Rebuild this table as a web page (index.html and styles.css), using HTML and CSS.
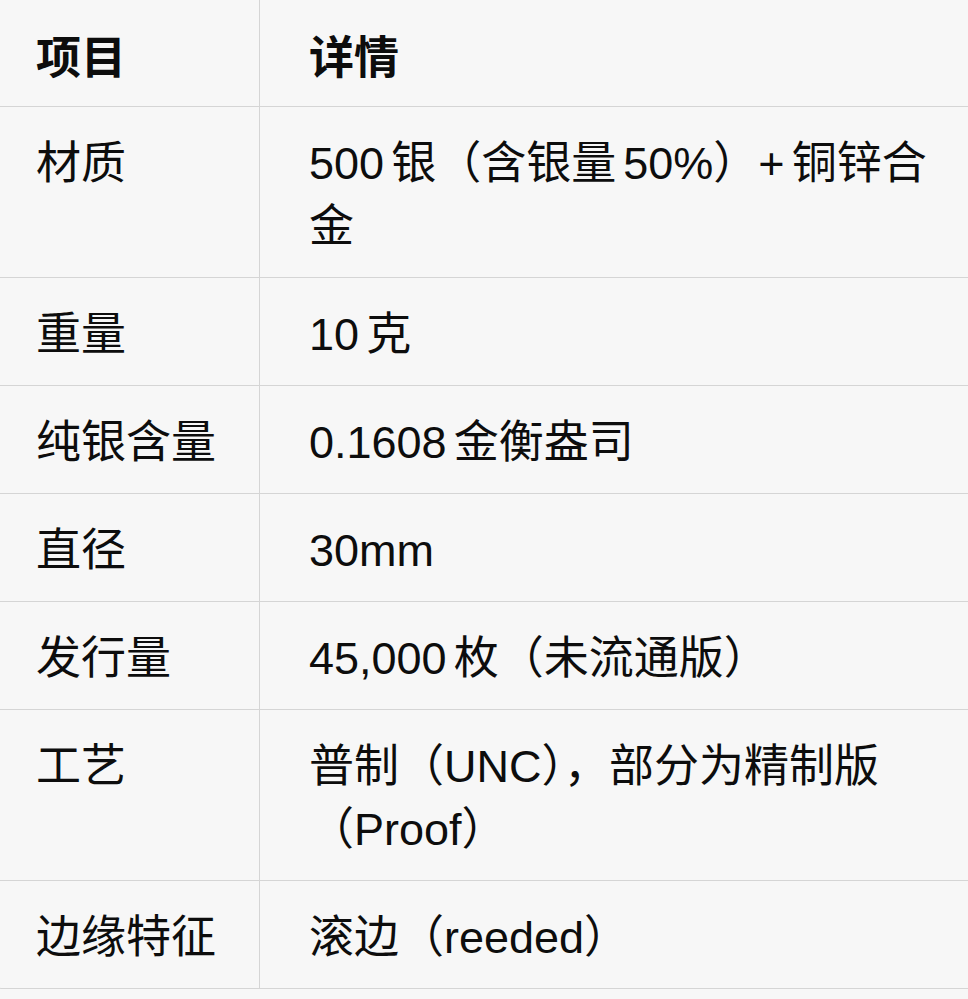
FILE: index.html
```html
<!DOCTYPE html>
<html lang="zh-CN">
<head>
<meta charset="utf-8">
<title>规格</title>
<link rel="stylesheet" href="styles.css">
</head>
<body>
<div class="scroller">
  <table class="spec">
    <thead>
      <tr><th class="key">项目</th><th class="val">详情</th></tr>
    </thead>
    <tbody>
      <tr><td class="key">材质</td><td class="val">500 银（含银量 50%）+ 铜锌合金</td></tr>
      <tr><td class="key">重量</td><td class="val">10 克</td></tr>
      <tr><td class="key">纯银含量</td><td class="val">0.1608 金衡盎司</td></tr>
      <tr><td class="key">直径</td><td class="val">30mm</td></tr>
      <tr><td class="key">发行量</td><td class="val">45,000 枚（未流通版）</td></tr>
      <tr><td class="key">工艺</td><td class="val">普制（UNC），部分为精制版（Proof）</td></tr>
      <tr><td class="key">边缘特征</td><td class="val">滚边（reeded）</td></tr>
    </tbody>
  </table>
</div>
</body>
</html>
```

FILE: styles.css
```css
html, body {
  margin: 0;
  padding: 0;
  background: #f7f7f7;
  overflow: hidden;
}

body {
  font-family: "Liberation Sans", "Noto Sans CJK SC", sans-serif;
  font-size: 45px;
  line-height: 63px;
  color: #0d0d0d;
}

.scroller {
  margin: -2px 0 0 -13px;
  width: calc(100% + 13px);
  overflow: hidden;
}

.spec {
  width: 1008px;
  border-collapse: separate;
  border-spacing: 0;
  border: 1px solid #d5d5d5;
  border-radius: 14px;
  background: #f7f7f7;
  table-layout: fixed;
  word-spacing: -0.12em;
}

.spec th,
.spec td {
  text-align: left;
  vertical-align: top;
  padding: 25px 49px 19px 49px;
  border-top: 1px solid #d5d5d5;
}

.spec thead th {
  border-top: none;
  padding-top: 28px;
  padding-bottom: 16px;
  font-weight: 700;
}

.spec .key {
  width: 223px;
  padding-left: 48px;
  padding-right: 0;
  border-right: 1px solid #d5d5d5;
}

.spec .val {
  padding-left: 49px;
}
```
